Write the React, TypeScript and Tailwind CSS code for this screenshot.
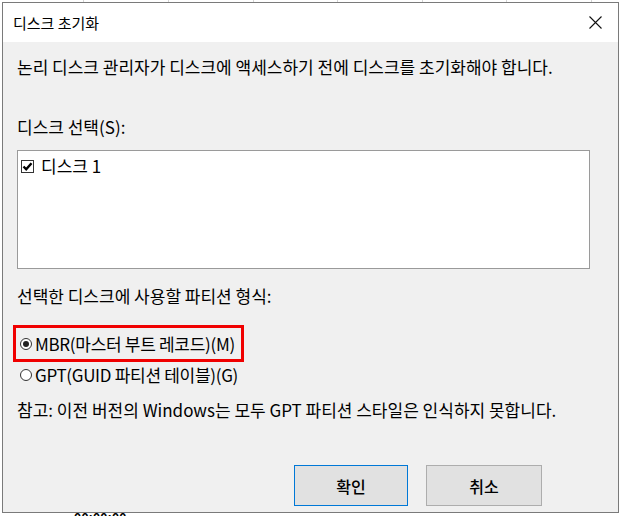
import React from 'react';

const font = "font-['Noto_Sans_CJK_KR','Noto_Sans',sans-serif]";

function CheckBox() {
  return (
    <span className="flex h-[13px] w-[13px] items-center justify-center border border-[#333] bg-white">
      <svg width="11" height="11" viewBox="0 0 11 11">
        <path d="M1.5 5.5 L4.2 8.3 L9.5 2.2" fill="none" stroke="#000" strokeWidth="2.4" />
      </svg>
    </span>
  );
}

function Radio({ checked }: { checked?: boolean }) {
  return (
    <span className="flex h-[12px] w-[12px] shrink-0 items-center justify-center rounded-full border border-[#333] bg-white">
      {checked && <span className="h-[6px] w-[6px] rounded-full bg-[#222]" />}
    </span>
  );
}

export default function App() {
  return (
    <div className={`relative h-[516px] w-[621px] overflow-hidden bg-white text-black ${font}`}>
      {/* spreadsheet grid peeking behind the dialog */}
      <div className="absolute inset-x-0 top-0 flex h-[3px]">
        {[84, 85, 85, 84, 85, 84, 85].map((w, i) => (
          <div key={i} className="h-full shrink-0 border-r border-[#d4d4d4]" style={{ width: w }} />
        ))}
      </div>
      <div className="absolute bottom-[-7px] left-[74px] text-[12px] leading-[12px] font-bold tracking-wide">00:00:00</div>

      <div className="relative ml-[2px] mt-[2px] flex h-[511px] w-[617px] flex-col border border-[#7a7a7a] bg-[#f0f0f0]">
        <div className="flex h-[39px] items-center justify-between bg-white pl-[10px] pr-[16px]">
          <span className="text-[15px] leading-5">디스크 초기화</span>
          <svg width="13" height="13" viewBox="0 0 13 13">
            <path d="M0.5 0.5 L12.5 12.5 M12.5 0.5 L0.5 12.5" stroke="#111" strokeWidth="1.1" />
          </svg>
        </div>

        <div className="flex flex-1 flex-col px-[14px] text-[17px] leading-5">
          <p className="mt-[15px]">논리 디스크 관리자가 디스크에 액세스하기 전에 디스크를 초기화해야 합니다.</p>
          <p className="mt-[40px]">디스크 선택(S):</p>

          <div className="mt-[13px] h-[119px] w-[573px] border border-[#9a9a9a] bg-white px-[3px] py-[5px]">
            <div className="flex items-center gap-[7px]">
              <CheckBox />
              <span>디스크 1</span>
            </div>
          </div>

          <p className="mt-[17px]">선택한 디스크에 사용할 파티션 형식:</p>

          <div className="-ml-[4px] mt-[19px] flex h-[37px] w-[231px] items-center gap-[3px] border-[3px] border-[#f00000] pl-[4px]">
            <Radio checked />
            <span className="whitespace-nowrap tracking-[-0.3px]">MBR(마스터 부트 레코드)(M)</span>
          </div>

          <div className="mt-[3px] flex items-center gap-[3px] pl-[3px]">
            <Radio />
            <span className="tracking-[-0.3px]">GPT(GUID 파티션 테이블)(G)</span>
          </div>

          <p className="mt-[15px]">참고: 이전 버전의 Windows는 모두 GPT 파티션 스타일은 인식하지 못합니다.</p>

          <div className="mt-auto mb-[6px] flex justify-end gap-[18px] pr-[62px]">
            <button className="h-[41px] w-[114px] border border-[#0078d7] bg-[#e1e1e1] text-[16px] font-medium">확인</button>
            <button className="h-[41px] w-[116px] border border-[#adadad] bg-[#e1e1e1] text-[16px] font-medium">취소</button>
          </div>
        </div>
      </div>
    </div>
  );
}
